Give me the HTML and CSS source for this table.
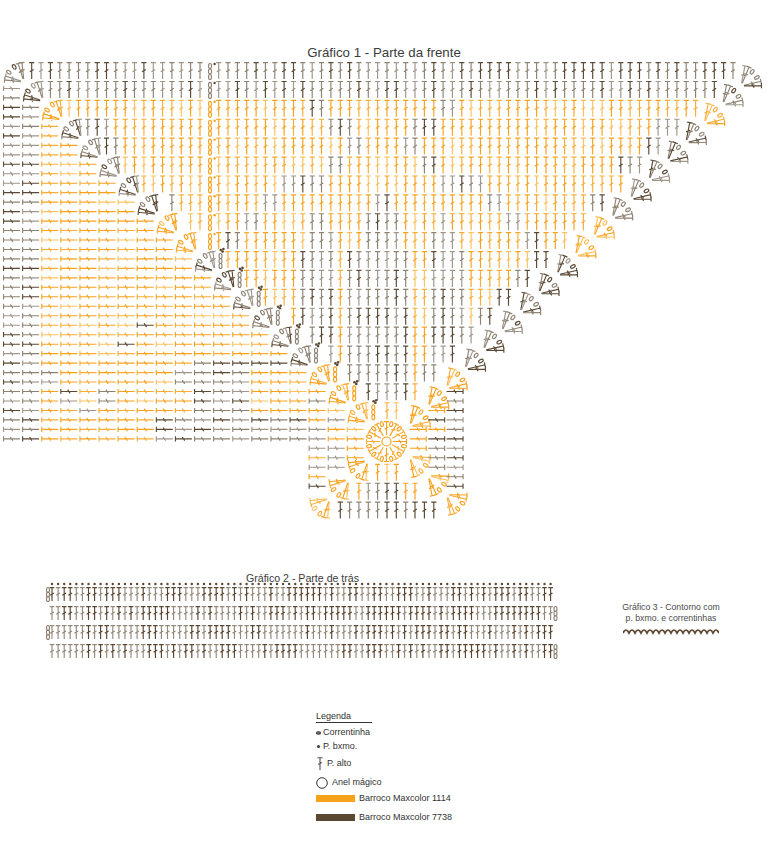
FILE: index.html
```html
<!DOCTYPE html>
<html lang="pt">
<head>
<meta charset="utf-8">
<title>Gráficos</title>
<link rel="stylesheet" href="styles.css">
</head>
<body>
<div class="page">
  <h1 class="g1-title">Gráfico 1 - Parte da frente</h1>
  <svg id="chart1" class="chart1" viewBox="0 60 768 470" width="768" height="470"></svg>
  <div class="row2">
    <div class="g2">
      <h2 class="g2-title">Gráfico 2 - Parte de trás</h2>
      <svg id="chart2" class="chart2" viewBox="40 580 525 85" width="525" height="85"></svg>
    </div>
    <div class="g3">
      <p class="g3-text">Gráfico 3 - Contorno com<br>p. bxmo. e correntinhas</p>
      <svg class="g3-edge" viewBox="0 0 96 9" width="96" height="9"><path d="M0 7q3 -6 6 0q3 -6 6 0q3 -6 6 0q3 -6 6 0q3 -6 6 0q3 -6 6 0q3 -6 6 0q3 -6 6 0q3 -6 6 0q3 -6 6 0q3 -6 6 0q3 -6 6 0q3 -6 6 0q3 -6 6 0q3 -6 6 0q3 -6 6 0"/></svg>
    </div>
  </div>
  <div class="legend">
    <div class="legend-title">Legenda</div>
    <div class="li li-chain"><svg class="ic-chain" viewBox="0 0 5 4" width="5" height="4"><ellipse cx="2.5" cy="2" rx="2" ry="1.3"/></svg><span>Correntinha</span></div>
    <div class="li li-dot"><svg class="ic-dot" viewBox="0 0 5 5" width="5" height="5"><circle cx="2.5" cy="2.5" r="1.6"/></svg><span>P. bxmo.</span></div>
    <div class="li li-alto"><svg class="ic-alto" viewBox="0 0 6 13" width="6" height="13"><path d="M3 13V0.7M0.4 0.7H5.6M1.2 7.6L4.8 5.6"/></svg><span>P. alto</span></div>
    <div class="li li-ring"><svg class="ic-ring" viewBox="0 0 12 12" width="12" height="12"><circle cx="6" cy="6" r="5.3"/></svg><span>Anel mágico</span></div>
    <div class="li li-orange"><span class="swatch swatch-orange"></span><span>Barroco Maxcolor 1114</span></div>
    <div class="li li-brown"><span class="swatch swatch-brown"></span><span>Barroco Maxcolor 7738</span></div>
  </div>
</div>
<script src="script.js"></script>
</body>
</html>
```

FILE: styles.css
```css
* { box-sizing: border-box; }
html, body { margin: 0; padding: 0; background: #ffffff; }
body { font-family: "Liberation Sans", Arial, sans-serif; color: #3f3f3f; }
.page { width: 768px; height: 843px; overflow: hidden; position: relative; }

.g1-title {
  margin: 0; padding-top: 46px; height: 60px;
  font-size: 13.3px; line-height: 14px; font-weight: normal;
  text-align: center; color: #3b3b3b;
}
.chart1 { display: block; overflow: visible; }
.chart1 path, .chart1 ellipse, .chart2 path, .chart2 ellipse { fill: none; stroke-width: 1.15; }

.row2 { display: flex; height: 181px; }
.g2 { margin-left: 40px; width: 525px; padding-top: 42px; }
.g2-title {
  margin: 0 0 -5px; font-size: 10.6px; line-height: 13px; font-weight: normal;
  text-align: center; color: #3b3b3b;
}
.chart2 { display: block; overflow: visible; }
.g3 { margin-left: 48px; width: 116px; padding-top: 71.6px; text-align: center; }
.g3-text { margin: 0; font-size: 8.7px; line-height: 11px; color: #4a4a4a; }
.g3-edge { display: block; margin: 2px auto 0; }
.g3-edge path { fill: none; stroke: #5b4631; stroke-width: 1.7; }

.legend {
  margin-left: 316px; display: flex; flex-direction: column; align-items: flex-start;
  font-size: 9px; color: #333;
}
.legend-title {
  width: 56px; height: 12px; line-height: 11px;
  border-bottom: 1px solid #333;
}
.li { display: flex; align-items: center; line-height: 11px; height: 11px; }
.li svg { display: block; flex: none; }
.li-chain { margin-top: 4px; gap: 2px; }
.li-dot { margin-top: 3px; gap: 2px; }
.li-alto { margin-top: 5px; height: 13px; line-height: 13px; gap: 4px; }
.li-ring { margin-top: 6px; height: 13px; line-height: 13px; gap: 4px; }
.li-orange { margin-top: 4px; gap: 4px; }
.li-brown { margin-top: 8px; gap: 4px; }
.ic-chain ellipse { fill: #777; stroke: #444; stroke-width: 1.1; }
.ic-dot circle { fill: #444; }
.ic-alto { margin-left: 1px; }
.ic-alto path { fill: none; stroke: #555; stroke-width: 1.1; }
.ic-ring circle { fill: none; stroke: #333; stroke-width: 1; }
.swatch { display: block; width: 39px; height: 7px; flex: none; }
.swatch-orange { background: #f7a21b; }
.swatch-brown { background: #5b4830; }
```

FILE: script.js
```js
(function () {
  var OR = ['#f7a21f', '#f9ad38', '#fbc160'];
  var BRW = ['#8e8373', '#a0968a', '#5b4934'];
  function hs(a, b) { var n = Math.sin(a * 12.9898 + b * 78.233) * 43758.5453; return n - Math.floor(n); }
  function colr(brown, a, b) {
    var r = hs(a, b);
    if (brown) return r < 0.33 ? BRW[2] : (r < 0.75 ? BRW[0] : BRW[1]);
    return r < 0.62 ? OR[0] : (r < 0.86 ? OR[1] : OR[2]);
  }
  var S = [];
  function f(v) { return v.toFixed(1); }
  function st(x, y, ang, len, c, bw) {
    bw = bw || 2.6; var L = len, m = -L * 0.5;
    S.push('<g transform="translate(' + f(x) + ',' + f(y) + ')' + (ang ? ' rotate(' + ang + ')' : '') + '" stroke="' + c + '"><path d="M0 0V' + (-L) + 'M' + (-bw) + ' ' + (-L + 0.55) + 'H' + bw + 'M-1.9 ' + f(m + 1.3) + 'L1.9 ' + f(m - 1.1) + '"/></g>');
  }
  function ov(x, y, ang, c) {
    S.push('<ellipse cx="' + f(x) + '" cy="' + f(y) + '" rx="1.5" ry="2.5" transform="rotate(' + ang + ' ' + f(x) + ' ' + f(y) + ')" stroke="' + c + '"/>');
  }
  function dot(x, y, c, r) { S.push('<circle cx="' + f(x) + '" cy="' + f(y) + '" r="' + (r || 1.3) + '" fill="' + c + '"/>'); }
  var rad = Math.PI / 180;
  function fan(bx, by, dir, brown, seed, len) {
    len = len || 17;
    [-39, -27, 27, 39].forEach(function (d) {
      var a = (dir + d) * rad;
      st(bx + 3 * Math.sin(a), by - 3 * Math.cos(a), dir + d, len, colr(brown, seed, d));
    });
    [-12, 12].forEach(function (d) {
      var a = (dir + d) * rad;
      ov(bx + 18 * Math.sin(a), by - 18 * Math.cos(a), dir + d, colr(brown, seed, d + 100));
    });
  }

  var Y = function (k) { return 62 + 18.9 * k; };
  var XL = function (c) { return 3 + 19.1 * c; };
  var BLx = function (k) { return 24 + 19.1 * k; };
  var BLy = function (k) { return 82 + 18.9 * k; };
  var RX = function (k) { return 735 - 18.4 * k; };
  var XI = function (i) { return 31.7 + 9.35 * i; };
  var YJ = function (j) { return 79 + 9.47 * j; };
  var CX = 386.5, CY = 441.5;

  function inR(x, arr) { for (var n = 0; n < arr.length; n++) if (x >= arr[n][0] && x <= arr[n][1]) return true; return false; }
  var P = {
    2: [[312, 328], [437, 455]],
    3: [[75, 112], [330, 357], [410, 440], [655, 690]],
    4: [[103, 120], [347, 365], [405, 422], [645, 662]],
    5: [[330, 347], [420, 435], [618, 642]],
    6: [[280, 330], [438, 485]],
    7: [[138, 180], [262, 280], [370, 395], [488, 502], [588, 610]],
    8: [[245, 260], [310, 330], [365, 398], [440, 446], [505, 522]],
    9: [[226, 240], [305, 335], [368, 398], [430, 455], [525, 540]]
  };
  function topBrown(k, x) {
    if (k <= 1) return true;
    if (P[k]) return inR(x, P[k]);
    if (k >= 10 && k <= 16) {
      if (x > RX(k) - 22) return true;
      return inR(x, [[300, 333], [343, 408], [433, 470]]);
    }
    if (k === 17) return x >= 362 && x <= 415;
    if (k === 18) return hs(x, k) < 0.4;
    return false;
  }
  function leftBrown(c, y) {
    if (c <= 1) return true;
    if (c === 2 && y >= 368 && y <= 386) return true;
    if ((c === 3 || c === 5) && y >= 387 && y <= 405) return true;
    if (c === 4 && y >= 405 && y <= 412) return true;
    if (c === 6 && y >= 340 && y <= 348) return true;
    if (c === 7 && y >= 320 && y <= 330) return true;
    if (c >= 8 && c <= 15 && y >= 413) return true;
    if (c >= 9 && c <= 12 && y >= 368 && y <= 386) return true;
    if (c >= 10 && c <= 12 && y >= 386 && y <= 412) return true;
    if (c >= 10 && c <= 15 && y >= 356 && y <= 366) return true;
    if (c === 16) return hs(c, y) < 0.7;
    if (c === 17) return hs(c, y) < 0.45;
    return false;
  }
  var FB = [0, 1, 3, 4, 5, 6, 7, 10, 11, 12, 13, 14, 15];
  function fanBrown(k) { return FB.indexOf(k) >= 0; }

  var k, i, j, c, m, x, y;
  for (k = 0; k <= 18; k++) {
    y = Y(k);
    var bx = BLx(k), by = BLy(k);
    var start = bx + (k >= 10 ? 12 : 5), end = RX(k);
    for (i = 0; i < 90; i++) {
      x = XI(i);
      if (x < start || x > end) continue;
      if (k <= 9 && Math.abs(x - 210) < 4.5) continue;
      st(x, y + 17, 0, 17, colr(topBrown(k, x), i, k));
    }
    if (k <= 9) {
      var cc = k <= 1 ? BRW[0] : OR[0];
      ov(210, y + 4, 0, cc); ov(210, y + 9.5, 0, cc); ov(210, y + 15, 0, cc);
      dot(214.6, y + 2, k <= 1 ? BRW[2] : OR[0], 1.2);
    } else {
      var ccol = k <= 15 ? BRW[0] : OR[0];
      ov(bx + 5.5, by - 15, 0, ccol); ov(bx + 5.5, by - 10, 0, ccol); ov(bx + 5.5, by - 5, 0, ccol);
      dot(bx + 5.8, by - 21, BRW[2], 1.3); dot(bx + 8.4, by - 22, BRW[2], 1.3); dot(bx + 7.6, by - 19.4, BRW[2], 1.3);
    }
    fan(bx, by, -45, fanBrown(k), k * 3 + 1);
    fan(RX(k) + 6, y + 24, 50, fanBrown(k), k * 3 + 2, 18);
  }
  for (c = 0; c <= 18; c++) {
    var x0 = XL(c), cby = BLy(c);
    var y0 = cby + 3, y1 = c <= 15 ? 442 : (2 * CY - cby - 3);
    for (j = 0; j < 50; j++) {
      y = YJ(j);
      if (y < y0 || y > y1) continue;
      st(x0 + 17, y, -90, 17, colr(leftBrown(c, y), c + 50, j));
    }
  }
  for (m = 0; m <= 2; m++) {
    k = 18 - m;
    var rbx = RX(k) + 6, rby = Y(k) + 24;
    for (j = 0; j < 50; j++) {
      y = YJ(j);
      if (y < rby + 3 || y > 2 * CY - rby - 3) continue;
      var rb = m === 2 ? true : (m === 1 ? hs(j, 7) < 0.55 : false);
      st(rbx, y, 90, 17, colr(rb, m + 80, j));
    }
    var yTop = 2 * CY - Y(k) - 17;
    for (i = 0; i < 90; i++) {
      x = XI(i);
      if (x < BLx(k) + 5 || x > RX(k)) continue;
      var bb = m === 2 ? true : (m === 1 ? (x >= 365 && x <= 402) : false);
      st(x, yTop + 17, 0, 17, colr(bb, i + 90, m));
    }
    fan(BLx(k), 2 * CY - BLy(k), -135, false, 200 + m);
    fan(rbx, 2 * CY - rby, 130, false, 210 + m, 18);
  }
  S.push('<circle cx="' + CX + '" cy="' + CY + '" r="4.5" fill="none" stroke="' + OR[0] + '" stroke-width="1.2"/>');
  for (i = 0; i < 12; i++) {
    var a = i * 30;
    st(CX + 6.5 * Math.sin(a * rad), CY - 6.5 * Math.cos(a * rad), a, 14, colr(false, i, 300));
    var b = (a + 15) * rad;
    ov(CX + 18 * Math.sin(b), CY - 18 * Math.cos(b), a + 15, OR[0]);
  }
  document.getElementById('chart1').innerHTML = S.join('');

  S = [];
  var tops = [587, 606, 625, 644];
  for (var r = 0; r < 4; r++) {
    for (var n = 0; n <= 82; n++) {
      x = 52 + 6.08 * n;
      var dk = hs(n, r + 400) < 0.5;
      st(x, tops[r] + 14, 0, 14, dk ? '#5a4631' : '#948a7c', 2.3);
      if (r === 0) dot(x, 584, '#5a4631', 1.2);
    }
    var chx = (r % 2 === 0) ? 48 : 555.5;
    ov(chx, tops[r] + 3, 0, '#8e8373'); ov(chx, tops[r] + 7.5, 0, '#8e8373'); ov(chx, tops[r] + 12, 0, '#8e8373');
  }
  document.getElementById('chart2').innerHTML = S.join('');
})();
```
